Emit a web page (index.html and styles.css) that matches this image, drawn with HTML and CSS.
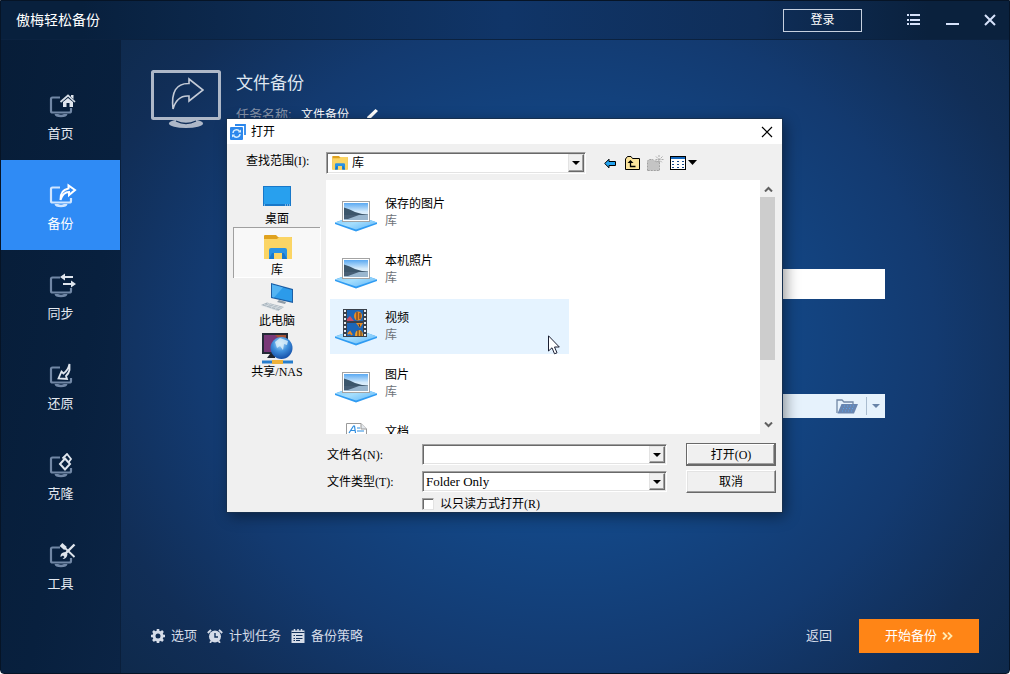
FILE: index.html
```html
<!DOCTYPE html>
<html lang="zh-CN">
<head>
<meta charset="utf-8">
<title>傲梅轻松备份</title>
<link rel="stylesheet" href="styles.css">
</head>
<body>
<svg class="defs" width="0" height="0" aria-hidden="true">
  <defs>
    <linearGradient id="plate" x1="0" y1="0" x2="1" y2="1"><stop offset="0" stop-color="#7cc9fb"/><stop offset=".5" stop-color="#a5defd"/><stop offset="1" stop-color="#5cb4f8"/></linearGradient>
    <linearGradient id="sky" x1="0" y1="0" x2="0" y2="1"><stop offset="0" stop-color="#5aa9f2"/><stop offset=".5" stop-color="#d3eafb"/><stop offset="1" stop-color="#f2f8fc"/></linearGradient>
    <radialGradient id="globe-fill" cx=".45" cy=".3" r=".7"><stop offset="0" stop-color="#b9e2fb"/><stop offset=".5" stop-color="#3f8fdb"/><stop offset="1" stop-color="#1550a8"/></radialGradient>
    <symbol id="monitor" viewBox="0 0 28 26">
      <path d="M11 4.500H3.500Q2 4.500 2 6V18Q2 19.500 3.500 19.500H20.500Q22 19.500 22 18V15" fill="none" stroke="currentColor" stroke-width="2.200"/>
      <path d="M5.500 21H9Q12 22.500 15 21H18.500Q18 24.300 12 24.300Q6 24.300 5.500 21Z" fill="currentColor"/>
    </symbol>
    <symbol id="plate-base" viewBox="0 0 42 55">
      <path d="M0 37.500L21 30L42 37.500V39L21 46.500L0 39Z" fill="#2f9bf2"/>
      <path d="M0 37.500L21 30L42 37.500L21 44.500Z" fill="url(#plate)"/>
    </symbol>
    <symbol id="picture-lib" viewBox="0 0 42 55">
      <use href="#plate-base"/>
      <path d="M7 16H35V37H7Z" fill="#a3a3a3"/><path d="M8 17H34V36H8Z" fill="#fff"/>
      <path d="M9 18H33V35H9Z" fill="url(#sky)"/>
      <path d="M9 22.500Q15 24 20 27L27 29L33 29.500V31H9Z" fill="#3c566b"/>
      <path d="M9 30H33V35H9Z" fill="#9ab7cf"/><path d="M9 30H24L13 34H9Z" fill="#465e75"/>
    </symbol>
    <symbol id="library" viewBox="0 0 28 25">
      <path d="M0 1Q0 0 1 0H12L14 2H27Q28 2 28 3V24H0Z" fill="#e0a21f"/>
      <path d="M0 4H13L15 2H27Q28 2 28 3V24H0Z" fill="#fbd565"/>
      <path d="M5 24V15Q5 13 7 13H21Q23 13 23 15V24H18V18H10V24Z" fill="#2b93e3"/>
      <path d="M5 24L8 18H10V24ZM18 24V18H20L23 24Z" fill="#1877cc"/>
    </symbol>
  </defs>
</svg>

<div class="window">
  <header class="titlebar">
    <h1 class="app-name">傲梅轻松备份</h1>
    <button class="login" type="button">登录</button>
    <div class="window-controls">
      <button type="button" aria-label="菜单"><svg width="14" height="12" viewBox="0 0 14 12"><path d="M0 1H2M3 1H13M0 6H2M3 6H13M0 10H2M3 10H13" stroke="#d6e2fb" stroke-width="2"/></svg></button>
      <button type="button" aria-label="最小化"><svg width="14" height="12" viewBox="0 0 14 12"><path d="M1 10H14" stroke="#d6e2fb" stroke-width="2"/></svg></button>
      <button type="button" aria-label="关闭"><svg width="12" height="12" viewBox="0 0 12 12"><path d="M1 1L11 11M11 1L1 11" stroke="#d6e2fb" stroke-width="2"/></svg></button>
    </div>
  </header>

  <div class="workspace">
    <nav class="sidebar">
      <a class="nav-item" href="#home"><svg width="28" height="26" viewBox="0 0 28 26"><use href="#monitor"/><path d="M11.500 9L19 2.500L26 9" fill="none" stroke="#d5dde6" stroke-width="1.700"/><path d="M14 9L19 5L24 9V14H20.500V10H17.500V14H14ZM22 2H24.500V6L22 4Z" fill="#dfe5ed"/></svg><span>首页</span></a>
      <a class="nav-item active" href="#backup"><svg width="28" height="26" viewBox="0 0 28 26"><use href="#monitor"/><path d="M11.500 17Q11 7 19.500 5.500V2.500L26 7L20 12V9Q14 9 11.500 17Z" fill="#2f8bf5" stroke="#fff" stroke-width="2"/></svg><span>备份</span></a>
      <a class="nav-item" href="#sync"><svg width="28" height="26" viewBox="0 0 28 26"><use href="#monitor"/><path d="M24 4H14M14 11H24" stroke="#dfe5ed" stroke-width="2"/><path d="M16 .500V7.500L11 4ZM22 7.500V14.500L27 11Z" fill="#dfe5ed"/></svg><span>同步</span></a>
      <a class="nav-item" href="#restore"><svg width="28" height="26" viewBox="0 0 28 26"><use href="#monitor"/><path d="M20.500 1V7Q20 10 17 13L18 16L9.500 15.500L12.500 8.500L14.500 10.500Q19 7.500 20.500 1Z" fill="#0a2342" stroke="#dfe5ed" stroke-width="1.800"/></svg><span>还原</span></a>
      <a class="nav-item" href="#clone"><svg width="28" height="26" viewBox="0 0 28 26"><use href="#monitor"/><path d="M13.500 5.500L18 1L22 6L19 10" fill="none" stroke="#dfe5ed" stroke-width="1.800"/><path d="M16 5.500L21 11L16 16.500L11 11Z" fill="#0a2342" stroke="#dfe5ed" stroke-width="2"/></svg><span>克隆</span></a>
      <a class="nav-item" href="#tools"><svg width="28" height="26" viewBox="0 0 28 26"><use href="#monitor"/><path d="M12 1.500L16.500 5.500" stroke="#dfe5ed" stroke-width="4"/><path d="M16 5L25.500 14" stroke="#dfe5ed" stroke-width="1.800"/><path d="M25.500 1.500L15.500 11.500" stroke="#dfe5ed" stroke-width="2.400"/><path d="M16.500 9Q11 9.500 11.500 14L14 12.500L15.500 14L13.500 16Q18 16 18.500 11Z" fill="#dfe5ed"/></svg><span>工具</span></a>
    </nav>

    <main class="content">
      <div class="task-head">
        <svg width="70" height="58" viewBox="0 0 70 58" aria-hidden="true"><rect x="1.500" y="1.500" width="67" height="47" rx="1" fill="none" stroke="#aeb8c8" stroke-width="3"/><ellipse cx="35" cy="53.500" rx="17" ry="4.500" fill="#aeb8c8"/><path d="M25 51Q35 56 45 51" fill="none" stroke="#12305a" stroke-width="1.300"/><path d="M22 39Q19 13 38 13.500V9L52 20L38 31V26Q26 25 22 39Z" fill="none" stroke="#c3cad6" stroke-width="1.600"/></svg>
        <div class="task-text">
          <h2>文件备份</h2>
          <p><span class="muted">任务名称:</span><span class="task-name">文件备份</span><button type="button" class="edit" aria-label="编辑名称"><svg width="13" height="13" viewBox="0 0 13 13"><path d="M0 12L1.500 7.500L9.500 0L12 2L4 10Z" fill="#fff"/></svg></button></p>
        </div>
      </div>

      <form class="task-form">
        <input class="source-field" type="text" aria-label="源文件夹">
        <div class="target-field">
          <input type="text" aria-label="目标位置">
          <button type="button" aria-label="浏览"><svg width="23" height="15" viewBox="0 0 23 15"><path d="M1 14V1H6L8 3H17V5" fill="none" stroke="#7187a5" stroke-width="1.300"/><path d="M5.500 5H22L18 14.500H1.500Z" fill="#6885b0"/><path d="M8 7H19M7 9.500H18M6 12H17" stroke="#57a1e9" stroke-dasharray="1 2"/></svg></button>
          <button class="target-menu" type="button" aria-label="更多"><svg width="8" height="4" viewBox="0 0 8 4"><path d="M0 0H8L4 4Z" fill="#6883a7"/></svg></button>
        </div>
      </form>

      <footer class="actions">
        <button class="tool" type="button"><svg width="14" height="14" viewBox="0 0 14 14"><circle cx="7" cy="7" r="4" fill="none" stroke="#d5dce8" stroke-width="3"/><path d="M7 0V3M7 11V14M0 7H3M11 7H14M2 2L4 4M10 10L12 12M12 2L10 4M4 10L2 12" stroke="#d5dce8" stroke-width="2.600"/></svg>选项</button>
        <button class="tool" type="button"><svg width="16" height="14" viewBox="0 0 16 14"><circle cx="8" cy="7.500" r="6" fill="#d5dce8"/><path d="M.800 4L4 .800M15.200 4L12 .800M4.500 12L3 13.800M11.500 12L13 13.800" stroke="#d5dce8" stroke-width="1.800"/><path d="M8 4V8H11" fill="none" stroke="#12305a" stroke-width="1.400"/></svg>计划任务</button>
        <button class="tool" type="button"><svg width="14" height="14" viewBox="0 0 14 14"><path d="M.500 1.500H13.500V14H.500Z" fill="#d5dce8"/><path d="M3.500 0V3M7 0V3M10.500 0V3" stroke="#d5dce8" stroke-width="1.500"/><path d="M.500 3.500H13.500M2.500 6.500H4M5 6.500H11.500M2.500 9.500H4M5 9.500H11.500M2.500 11.500H4M5 11.500H9" stroke="#12305a"/></svg>备份策略</button>
        <button class="back" type="button">返回</button>
        <button class="start" type="button">开始备份<svg width="11" height="8" viewBox="0 0 11 8"><path d="M1 .500L4.500 4L1 7.500M6 .500L9.500 4L6 7.500" fill="none" stroke="#ffeab0" stroke-width="1.800"/></svg></button>
      </footer>
    </main>
  </div>

  <section class="dialog" role="dialog" aria-labelledby="dialog-title">
    <div class="dialog-title">
      <svg width="16" height="16" viewBox="0 0 16 16" aria-hidden="true"><path d="M5 1H15V11" fill="none" stroke="#2b87ec" stroke-width="1.800"/><rect y="3" width="13" height="13" rx="1" fill="#2b87ec"/><path d="M3 9A3.500 3.500 0 0 1 9.500 7.500M10 10A3.500 3.500 0 0 1 3.500 11.500" fill="none" stroke="#d8efff" stroke-width="1.500"/><path d="M8 8.500H11V5.500ZM5 10.500H2V13.500Z" fill="#d8efff"/></svg>
      <span id="dialog-title">打开</span>
      <button type="button" aria-label="关闭"><svg width="12" height="12" viewBox="0 0 12 12"><path d="M1 1L11 11M11 1L1 11" stroke="#000" stroke-width="1.200"/></svg></button>
    </div>

    <div class="dialog-body">
      <label class="look-label" for="look-in">查找范围(I):</label>
      <div class="look-row">
        <div class="combo look-combo">
          <svg class="combo-icon" width="16" height="14" viewBox="0 0 28 25" aria-hidden="true"><use href="#library"/></svg>
          <select id="look-in"><option>库</option></select><span class="arrow"></span>
        </div>
        <div class="toolbar">
          <button type="button" aria-label="后退"><svg width="12" height="11" viewBox="0 0 12 11"><path d="M.700 5.500L5 1.200V3.500H11.500V7.500H5V9.800Z" fill="#23a3ef" stroke="#000"/></svg></button>
          <button type="button" aria-label="向上一级"><svg width="15" height="14" viewBox="0 0 15 14"><path d="M.500 13.500V3L2.500 .500H6L7.500 2.500H14.500V13.500Z" fill="#fbe49b" stroke="#000"/><path d="M5.500 5V10.500H10.500" fill="none" stroke="#000" stroke-width="1.300"/><path d="M5.500 4L8.500 7H2.500Z"/></svg></button>
          <button type="button" aria-label="新建文件夹" disabled><svg width="17" height="16" viewBox="0 0 17 16"><path d="M.500 15.500V6L2 4.500H6L7.500 6H12.500V15.500Z" fill="#c4c4c4" stroke="#a0a0a0" stroke-dasharray="2 1"/><path d="M12 0V9M8.500 4.500H17M9 1.500L15.500 8M15.500 1.500L9 8" stroke="#aaa" stroke-dasharray="2 1"/></svg></button>
          <button type="button" aria-label="查看"><svg width="27" height="14" viewBox="0 0 27 14"><rect x=".500" y=".500" width="15" height="13" fill="#fff" stroke="#000"/><path d="M1 2H15" stroke="#1468bd" stroke-width="2"/><path d="M2 5.500H4M7 5.500H9M12 5.500H14M2 8.500H4M7 8.500H9M12 8.500H14M2 11.500H4M7 11.500H9M12 11.500H14" stroke="#174a8c"/><path d="M18 4H27L22.500 9Z"/></svg></button>
        </div>
      </div>

      <nav class="places" aria-label="位置">
        <button type="button"><svg width="32" height="31" viewBox="0 0 32 31"><path d="M2 6H30V26H2Z" fill="#1878c9"/><path d="M3 7H29V24H3Z" fill="#28a0ee"/><path d="M3 25H5M24 25H29" stroke="#d7efff" stroke-dasharray="1 1"/></svg>桌面</button>
        <button type="button" class="selected"><svg width="32" height="31" viewBox="0 0 32 31"><use href="#library" x="3" y="4" width="28" height="25"/></svg>库</button>
        <button type="button"><svg width="32" height="31" viewBox="0 0 32 31"><path d="M10 1L32 7V21L10 16Z" fill="#1c5ea5"/><path d="M11 2.500L31 8V19.500L11 15Z" fill="#2c9bea"/><path d="M11 2.500L22 5.500L13 15.500L11 15Z" fill="#54b4f3"/><path d="M18 18L25 20L24 22L16 20Z" fill="#8e9aa5"/><path d="M0 23L6 20.500L23 25L17 29Z" fill="#a9b5be"/><path d="M3 22.500L20 27M6 21.500L22 26M1 24L17 28.500M5 24.500L9 21M10 26L14 22.500M14 27L18 24" stroke="#e4e9ec" stroke-width=".600"/></svg>此电脑</button>
        <button type="button"><svg width="32" height="31" viewBox="0 0 32 31"><path d="M1 0H27V21H1Z" fill="#242a36"/><path d="M3 2H25V19H3Z" fill="#793878"/><path d="M14 2H25V12Z" fill="#a75335"/><path d="M9 21H14V25H6Z" fill="#20252e"/><circle cx="20.500" cy="15" r="11" fill="url(#globe-fill)"/><path d="M14 9L19 5L27 8L26 12L23 11L22 17L19 13L16 15Z" fill="#def1fa" opacity=".8"/><path d="M1 29H32" stroke="#267dcc" stroke-width="3"/><path d="M11 27H22V31H11Z" fill="#edb23b"/></svg>共享/NAS</button>
      </nav>

      <div class="file-area">
        <ul class="files">
          <li><svg width="42" height="55" aria-hidden="true"><use href="#picture-lib"/></svg><div>保存的图片<small>库</small></div></li>
          <li><svg width="42" height="55" aria-hidden="true"><use href="#picture-lib"/></svg><div>本机照片<small>库</small></div></li>
          <li class="hovered"><svg width="42" height="55" viewBox="0 0 42 55" aria-hidden="true"><use href="#plate-base"/><path d="M8 10H32V38H8Z" fill="#39404a"/><path d="M10 11V38M30 11V38" stroke="#e8edf2" stroke-width="2" stroke-dasharray="2 2"/><path d="M12 11H28V22H12ZM12 24H28V37H12Z" fill="#1c66b7"/><ellipse cx="23" cy="17" rx="4" ry="4.500" fill="#e98b22"/><path d="M22 13V21M25 14V20" stroke="#4b2d24"/><path d="M12 20L15 17L19 22H12Z" fill="#cb4d64"/><path d="M21 24H28L25 29Z" fill="#e98b22"/><path d="M20 37Q20 31 24 31Q28 31 28 37Z" fill="#f0a52d"/><path d="M23 31V37M26 32V37M24 25L25 28" stroke="#4b2d24"/><path d="M13 35L15 33L17 36" fill="none" stroke="#e98b22" stroke-width="2"/></svg><div>视频<small>库</small></div></li>
          <li><svg width="42" height="55" aria-hidden="true"><use href="#picture-lib"/></svg><div>图片<small>库</small></div></li>
          <li><svg width="42" height="55" viewBox="0 0 42 55" aria-hidden="true"><use href="#plate-base"/><path d="M11.500 10.500H26L31.500 16V42H11.500Z" fill="#fff" stroke="#9a9a9a"/><path d="M26 10.500V16H31.500" fill="#e3e8ed" stroke="#9a9a9a"/><path d="M14 20L18.500 13H19.500L20.500 20M16 17.500H20M22 15H25M22 18H29M14 22.500H29M14 25H29" fill="none" stroke="#2d8de0" stroke-width="1.200"/></svg><div>文档<small>库</small></div></li>
        </ul>
        <div class="scrollbar" aria-hidden="true">
          <svg width="9" height="6" viewBox="0 0 9 6"><path d="M1 5.500L4.500 2L8 5.500" fill="none" stroke="#606060" stroke-width="2"/></svg>
          <div class="track"><div class="thumb"></div></div>
          <svg width="9" height="6" viewBox="0 0 9 6"><path d="M1 .500L4.500 4L8 .500" fill="none" stroke="#606060" stroke-width="2"/></svg>
        </div>
        <svg class="pointer" width="12" height="20" viewBox="0 0 12 20" aria-hidden="true"><path d="M.500 .800V16L4 12.800L6.500 18.800L9 17.800L6.500 12H11.300Z" fill="#fff" stroke="#1b1f33"/></svg>
      </div>

      <form class="open-form">
        <label for="file-name">文件名(N):</label>
        <div class="combo"><input id="file-name" type="text"><span class="arrow"></span></div>
        <button class="push default" type="button">打开(O)</button>
        <label for="file-type">文件类型(T):</label>
        <div class="combo"><select id="file-type"><option>Folder Only</option></select><span class="arrow"></span></div>
        <button class="push" type="button">取消</button>
        <div class="read-only"><input id="read-only" type="checkbox"><label for="read-only">以只读方式打开(R)</label></div>
      </form>
    </div>
  </section>
</div>
</body>
</html>
```
FILE: styles.css
```css
* { box-sizing: border-box; }

body {
  margin: 0;
  background: #fff;
  color: #fff;
  font: 12px/16px "Liberation Sans", "Noto Sans CJK SC", sans-serif;
}

h1, h2, p, ul { margin: 0; padding: 0; font-weight: normal; }
button, input, select { font: inherit; color: inherit; border: 0; margin: 0; padding: 0; border-radius: 0; outline: 0; }
button { background: none; }
svg { display: block; flex: none; }
.defs { position: absolute; }

.window {
  position: relative;
  display: flex;
  flex-direction: column;
  min-height: 100vh;
  overflow: hidden;
  border: 1px solid #061426;
  border-radius: 0 0 4px 4px;
  background: radial-gradient(ellipse 54% 72% at 56% 51%, #124b93 0%, #134888 35%, #133a70 68%, #112e57 90%, #0d2745 115%);
}

/* Title bar */
.titlebar {
  display: flex;
  align-items: center;
  height: 39px;
  padding-left: 15px;
  border-bottom: 1px solid #0b2240;
  background: linear-gradient(90deg, #08203d 8%, #0d2a50 25%, #103568 50%, #0f2e59 75%, #0a213d 92%);
}
.app-name { flex: 1; font-size: 14px; line-height: 20px; }
.login { width: 79px; height: 23px; margin-right: 33px; border: 1px solid #c6d0df; }
.window-controls { display: flex; }
.window-controls button { display: flex; justify-content: center; align-items: center; width: 38px; height: 38px; }

/* Sidebar */
.workspace { display: flex; flex: 1; }
.sidebar {
  width: 120px;
  flex: none;
  padding-top: 30px;
  border-right: 1px solid #0a1f3b;
  background: linear-gradient(100deg, #071d38 0%, #08203e 60%, #0b2445 100%);
}
.nav-item {
  display: flex;
  flex-direction: column;
  align-items: center;
  gap: 6px;
  height: 90px;
  padding-top: 23px;
  color: #7187a5;
  font-size: 13px;
  line-height: 18px;
  text-decoration: none;
}
.nav-item svg { margin-left: 4px; }
.nav-item span { color: #e4e9f0; }
.nav-item.active { background: #2f8bf5; color: #cfe5ff; }
.nav-item.active span { color: #fff; }

/* Backup task */
.content { display: flex; flex: 1; flex-direction: column; padding: 30px 30px 20px; }
.task-head { display: flex; gap: 15px; height: 58px; }
.task-text h2 { font-size: 17px; line-height: 28px; color: #dfe6f0; }
.task-text p { display: flex; align-items: center; height: 18px; margin-top: 8px; }
.muted { width: 65px; font-size: 13px; color: #8693a8; }
.edit { margin-left: 17px; }
.task-form { display: flex; flex-direction: column; gap: 95px; margin: 141px 94px 0 85px; }
.source-field { width: 100%; height: 30px; background: #fff; color: #222; }
.target-field { display: flex; align-items: center; height: 24px; background: #e6f2fc; color: #222; }
.target-field input { flex: 1; min-width: 0; height: 24px; background: none; }
.target-menu { display: flex; align-items: center; justify-content: center; width: 19px; height: 18px; margin-left: 7px; border-left: 1px solid #a9bccf; }

.actions { display: flex; align-items: center; gap: 10px; margin-top: auto; font-size: 13px; line-height: 18px; color: #d5dce8; }
.tool { display: flex; align-items: center; gap: 6px; }
.back { margin-left: auto; }
.start { display: flex; align-items: center; justify-content: center; gap: 5px; width: 120px; height: 34px; margin-left: 17px; background: #ff8516; color: #fff; }

/* Open dialog floating over the main window */
.dialog {
  position: absolute;
  top: 118px;
  left: 50%;
  width: 555px;
  margin-left: -278px;
  background: #f0f0f0;
  color: #000;
  box-shadow: 0 0 0 1px #17304f, 3px 4px 14px rgba(0, 0, 0, .45);
  font-family: "Liberation Serif", "Noto Sans CJK SC", serif;
}
.dialog-title { display: flex; align-items: center; gap: 5px; height: 25px; padding: 0 9px 0 3px; background: #fff; }
.dialog-title button { margin-left: auto; }
.dialog-body { display: grid; grid-template-columns: 88px 1fr; grid-template-rows: 36px 254px auto; column-gap: 5px; padding: 0 6px; }
.look-label { padding: 9px 0 0 13px; white-space: nowrap; }
.look-row { display: flex; align-items: center; padding-top: 2px; }
.look-combo { flex: 0 1 260px; }
.toolbar { display: flex; margin-left: 12px; }
.toolbar button { display: flex; align-items: center; justify-content: center; width: 23px; height: 22px; }
.toolbar button:last-child { width: 33px; }

.combo {
  position: relative;
  display: flex;
  height: 22px;
  padding: 1px;
  border: 1px solid;
  border-color: #a0a0a0 #fff #fff #a0a0a0;
  background: #fff;
  box-shadow: inset 1px 1px #696969, inset -1px -1px #e3e3e3;
}
.combo input, .combo select { flex: 1; min-width: 0; padding: 0 18px 0 2px; background: none; appearance: none; }
.combo-icon { position: absolute; left: 5px; top: 3px; }
.combo .combo-icon + select { padding-left: 24px; }
.arrow {
  position: absolute;
  top: 1px;
  right: 1px;
  bottom: 1px;
  display: flex;
  align-items: center;
  justify-content: center;
  width: 16px;
  border: 1px solid;
  border-color: #e3e3e3 #696969 #696969 #e3e3e3;
  background: #f0f0f0;
  box-shadow: inset -1px -1px #a0a0a0;
  pointer-events: none;
}
.arrow::after { content: ""; border: 4px solid transparent; border-top-color: #000; border-bottom: 0; }

.places { display: grid; grid-template-rows: 47px 51px 51px 51px; }
.places button { display: flex; flex-direction: column; align-items: center; justify-content: flex-end; border: 1px solid transparent; border-bottom: 0; border-top: 0; }
.places .selected { border-color: #a0a0a0 #fff #fff #a0a0a0; background: #f8f8f8; box-shadow: inset 0 1px #a0a0a0, inset 0 -1px #fff; }

.file-area { position: relative; display: flex; background: #fff; overflow: hidden; font-family: "Liberation Sans", "Noto Sans CJK SC", sans-serif; line-height: 17px; }
.files { flex: 1; display: flex; flex-direction: column; gap: 2px; padding: 5px 0 0 4px; list-style: none; }
.files li { display: flex; flex: none; align-items: center; gap: 8px; width: 239px; height: 55px; padding-left: 5px; }
.files small { display: block; font-size: 12px; color: #6d7278; }
.files .hovered { background: #e5f3ff; }
.scrollbar { display: flex; flex-direction: column; align-items: center; width: 16px; padding: 6px 0; background: #f0f0f0; }
.track { flex: 1; align-self: stretch; padding: 5px 0; }
.thumb { width: 15px; height: 74%; background: #cdcdcd; }
.pointer { position: absolute; left: 222px; top: 155px; }

.open-form { grid-column: 2; display: grid; grid-template-columns: 96px 1fr 90px; grid-template-rows: 23px 23px 14px; row-gap: 4px; align-items: center; padding: 9px 0 1px; }
.open-form > label { padding-left: 1px; }
.open-form .combo { height: 21px; margin-right: 19px; }
.open-form .combo select { font-size: 13px; }
.push { height: 23px; border: 1px solid; border-color: #fff #696969 #696969 #fff; background: #f0f0f0; box-shadow: inset -1px -1px #a0a0a0, inset 1px 1px #e3e3e3; }
.push.default { border-color: #696969; box-shadow: inset -1px -1px #696969, inset 1px 1px #fff, inset -2px -2px #a0a0a0; }
.read-only { grid-column: 2 / 4; display: flex; align-items: center; gap: 6px; line-height: 14px; }
.read-only input { width: 12px; height: 12px; appearance: none; background: #fff; border: 1px solid; border-color: #a0a0a0 #e3e3e3 #e3e3e3 #a0a0a0; box-shadow: inset 1px 1px #696969; }
.read-only input:checked { background: #2f8bf5; }
```
